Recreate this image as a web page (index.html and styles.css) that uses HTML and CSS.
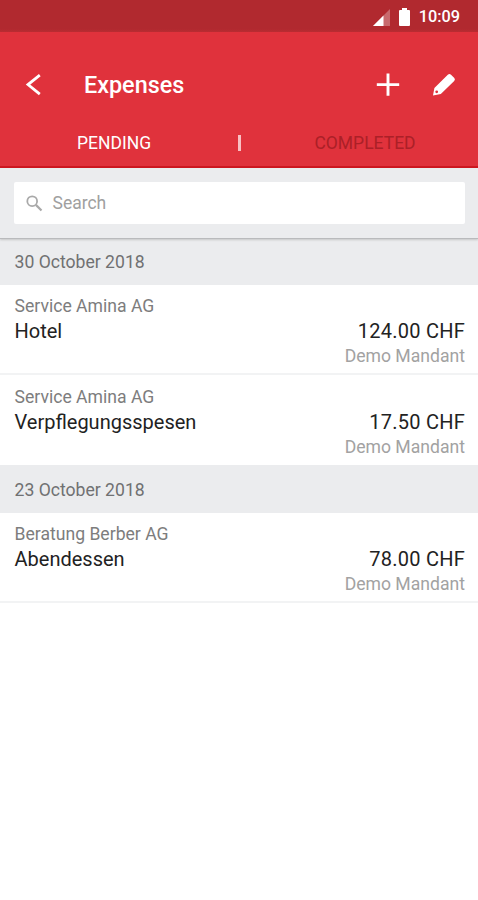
FILE: index.html
```html
<!DOCTYPE html>
<html lang="en">
<head>
<meta charset="utf-8">
<title>Expenses</title>
<link rel="stylesheet" href="styles.css">
</head>
<body>
<div class="status">
  <svg class="signal" width="17" height="17" viewBox="0 0 17 17"><path d="M17 0V17H0Z" fill="#fff" opacity=".3"/><path d="M10.500 6.500V17H0Z" fill="#fff"/></svg>
  <svg class="battery" width="11" height="18" viewBox="0 0 11 18"><path d="M3 0h5v2h2q1 0 1 1v14q0 1-1 1H1q-1 0-1-1V3q0-1 1-1h2z" fill="#fff"/></svg>
  <span class="clock">10:09</span>
</div>
<header class="header">
  <div class="bar">
    <svg class="back" width="16" height="22" viewBox="0 0 16 22"><path d="M14.800 1.200 3 10.600 14.800 20.200" fill="none" stroke="#fff" stroke-width="2.800"/></svg>
    <h1 class="title">Expenses</h1>
    <svg class="add" width="24" height="24" viewBox="0 0 24 24"><path d="M12 .4v22.400M.8 11.600h22.400" stroke="#fff" stroke-width="2.900"/></svg>
    <svg class="edit" width="24" height="24" viewBox="0 0 24 24"><path fill="#fff" fill-rule="evenodd" d="M1 22.600 2.400 15 15.800 1.800Q17.400.3 19 1.700L22.300 4.900Q23.600 6.400 22.200 7.900L8.800 21zM4.700 17.400A1.400 1.400 0 1 0 4.700 20.200 1.400 1.400 0 1 0 4.700 17.400z"/></svg>
  </div>
  <nav class="tabs">
    <span class="tab pending">PENDING</span>
    <span class="divider"></span>
    <span class="tab completed">COMPLETED</span>
  </nav>
</header>
<div class="search">
  <div class="field">
    <svg width="17" height="17" viewBox="0 0 17 17" fill="none" stroke="#a9a9a9"><circle cx="6.200" cy="6.200" r="4.900" stroke-width="1.800"/><path d="M9.900 9.900 15.500 15.500" stroke-width="2.200"/></svg>
    <span class="placeholder">Search</span>
  </div>
</div>
<main>
  <h2 class="date first">30 October 2018</h2>
  <article class="row">
    <div class="client">Service Amina AG</div>
    <div class="line"><span class="expense">Hotel</span><span class="amount">124.00 CHF</span></div>
    <div class="tenant">Demo Mandant</div>
  </article>
  <article class="row last">
    <div class="client">Service Amina AG</div>
    <div class="line"><span class="expense">Verpflegungsspesen</span><span class="amount">17.50 CHF</span></div>
    <div class="tenant">Demo Mandant</div>
  </article>
  <h2 class="date">23 October 2018</h2>
  <article class="row">
    <div class="client">Beratung Berber AG</div>
    <div class="line"><span class="expense">Abendessen</span><span class="amount">78.00 CHF</span></div>
    <div class="tenant">Demo Mandant</div>
  </article>
</main>
</body>
</html>
```
FILE: styles.css
```css
* { box-sizing: border-box; }
body { margin: 0; background: #fff; font-family: Roboto, sans-serif; color: #222; }
.status { height: 32px; background: linear-gradient(#b1292f 0 29px, #ba2c32 32px); display: flex; align-items: center; justify-content: flex-end; padding: 2px 18px 0 0; }
.battery { margin: 0 9px 0 9px; }
.clock { color: #fff; font-size: 16.3px; line-height: 20px; font-weight: 500; }
.header { height: 136px; background: #e0323c; border-bottom: 2px solid #ce1720; color: #fff; }
.bar { height: 105px; display: flex; align-items: center; padding: 0 22px 0 25px; }
.title { margin: 0 auto 0 43px; font-size: 23.4px; font-weight: 500; line-height: 30px; }
.edit { margin-left: 32px; }
.tabs { display: grid; grid-template-columns: 228px 22px 228px; align-items: center; text-align: center; margin-top: -4px; font-size: 17.5px; line-height: 20px; }
.tab { white-space: nowrap; }
.divider { justify-self: center; width: 3px; height: 16px; background: #f9c0c3; }
.completed { color: #ab2027; padding-left: 2px; }
.search { position: relative; height: 71px; padding: 14px 13px 0 14px; background: #ebecee; border-bottom: 1px solid #b9babc; box-shadow: 0 1px 2px rgba(0,0,0,.16); }
.field { height: 42px; background: #fff; border-radius: 2px; display: flex; align-items: center; padding-left: 12px; }
.placeholder { color: #a0a0a0; font-size: 17.5px; line-height: 22px; margin-left: 9.5px; }
.date { margin: 0; height: 48px; background: #ebecee; color: #707172; font-size: 17.6px; font-weight: 400; line-height: 50px; padding-left: 14.5px; }
.date.first { height: 46px; line-height: 46px; }
.row { height: 90px; padding: 9px 13px 0 14.5px; border-bottom: 2px solid #f2f3f4; }
.row.last { padding-top: 10px; border-bottom: 0; }
.client { color: #7d7d7d; font-size: 17.6px; line-height: 24px; }
.line { display: flex; justify-content: space-between; font-size: 20px; line-height: 26px; }
.amount { letter-spacing: .25px; }
.tenant { color: #a2a2a2; font-size: 17.6px; line-height: 24px; text-align: right; }
```
